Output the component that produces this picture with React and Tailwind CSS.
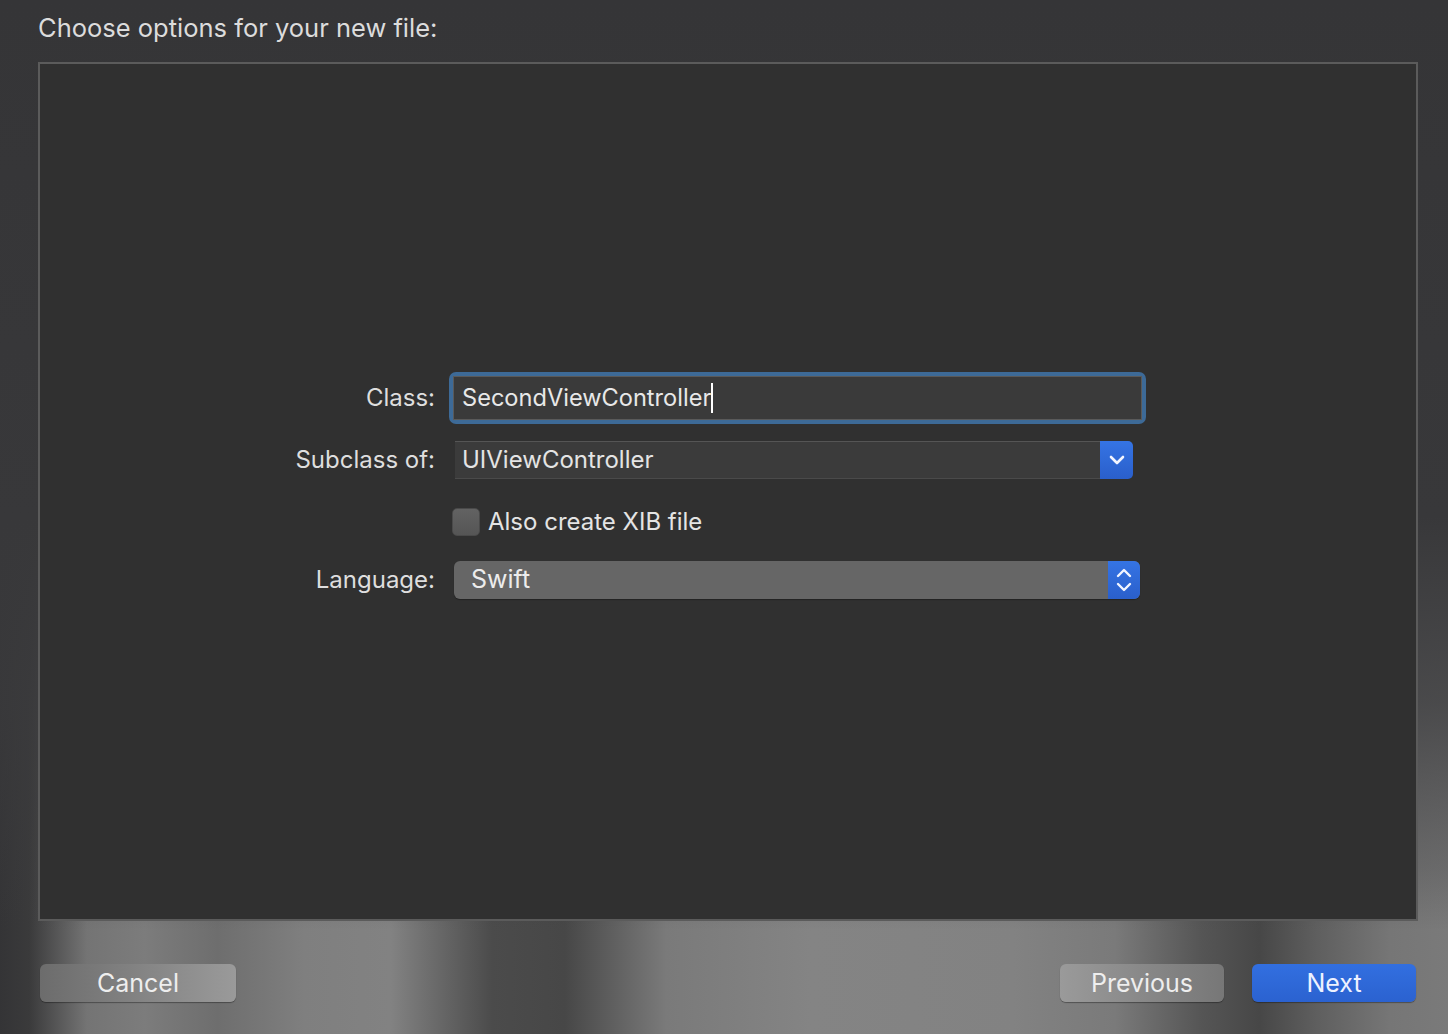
import React from "react";

const font = { fontFamily: "Inter, 'Liberation Sans', sans-serif" };

function ChevronDown() {
  return (
    <svg width="16" height="10" viewBox="0 0 16 10">
      <polyline points="2,2 8,8 14,2" fill="none" stroke="#f2f5ff" strokeWidth="2.6" strokeLinecap="round" strokeLinejoin="round" />
    </svg>
  );
}

function Stepper() {
  return (
    <svg width="18" height="28" viewBox="0 0 18 28">
      <polyline points="3,10 9,4 15,10" fill="none" stroke="#f2f5ff" strokeWidth="2.4" strokeLinecap="round" strokeLinejoin="round" />
      <polyline points="3,18 9,24 15,18" fill="none" stroke="#f2f5ff" strokeWidth="2.4" strokeLinecap="round" strokeLinejoin="round" />
    </svg>
  );
}

function Row({ label, children, className }) {
  return (
    <div className={"flex items-center " + (className || "")}>
      <div className="w-[395px] text-right text-[24px] text-[#dedede] leading-none">{label}</div>
      <div className="ml-[14px] flex items-center">{children}</div>
    </div>
  );
}

export default function App() {
  return (
    <div
      className="relative w-[1448px] h-[1034px] overflow-hidden bg-[linear-gradient(90deg,#343436_0%,#3a3a3b_2%,#747474_6%,#7c7c7c_10%,#6e6e6e_15%,#7f7f7f_21%,#828282_27%,#4b4b4b_34%,#474747_39%,#7a7a7a_46%,#848484_56%,#828282_70%,#7a7a7a_77%,#555555_83%,#474747_87%,#5f5f5f_91%,#767676_96%,#7a7a7a_100%)]"
      style={font}
    >
      <div className="absolute inset-0 bg-[linear-gradient(180deg,#353537_0%,#38383a_50%,rgba(58,58,60,0.75)_68%,rgba(58,58,60,0.25)_84%,rgba(58,58,60,0)_90%)]" />
      <div className="relative flex flex-col h-full">
        <div className="h-[62px] pl-[38px] pt-[13px] text-[25.5px] leading-[30px] text-[#dcdcdc]">
          Choose options for your new file:
        </div>
        <div className="ml-[38px] mr-[30px] h-[859px] border-2 border-[#5b5b5b] bg-[#303030] pt-[308px] flex flex-col">
          <Row label="Class:" className="h-[52px]">
            <div className="w-[697px] h-[52px] rounded-[7px] bg-[#3d6a97] p-[4px]">
              <div className="h-full border border-[#5a5a5a] bg-[#3a3a3a] flex items-center pl-[8px] text-[23.6px] text-[#e8e8e8]">
                SecondViewController
                <span className="inline-block w-[2px] h-[30px] bg-white" />
              </div>
            </div>
          </Row>
          <Row label="Subclass of:" className="h-[38px] mt-[17px]">
            <div className="ml-[6px] w-[678px] h-[38px] flex">
              <div className="flex-1 h-full bg-[#3b3b3b] border-t border-[#555555] border-b border-b-[#4a4a4a] flex items-center pl-[7px] text-[24px] text-[#e4e4e4]">
                UIViewController
              </div>
              <div className="w-[33px] h-full rounded-r-[5px] bg-[linear-gradient(180deg,#3574e4,#2a5fcb)] flex items-center justify-center">
                <ChevronDown />
              </div>
            </div>
          </Row>
          <Row label="" className="h-[28px] mt-[29px]">
            <div className="ml-[3px] flex items-center">
              <div className="w-[28px] h-[28px] rounded-[5px] bg-[linear-gradient(180deg,#626262,#555555)] border border-[#4a4a4a]" />
              <span className="ml-[8px] text-[24px] text-[#e4e4e4] leading-none">Also create XIB file</span>
            </div>
          </Row>
          <Row label="Language:" className="h-[38px] mt-[25px]">
            <div className="ml-[5px] w-[686px] h-[38px] flex rounded-[6px] bg-[#666666] shadow-[0_1px_1px_rgba(0,0,0,0.3)]">
              <div className="flex-1 flex items-center pl-[17px] text-[25px] text-[#ececec]">Swift</div>
              <div className="w-[32px] h-full rounded-r-[6px] bg-[linear-gradient(180deg,#3574e4,#2a5fcb)] flex items-center justify-center">
                <Stepper />
              </div>
            </div>
          </Row>
        </div>
        <div className="flex items-start pt-[43px] pl-[40px] pr-[32px]">
          <button className="w-[196px] h-[38px] rounded-[6px] bg-[linear-gradient(90deg,#6c6c6c,#9a9a9a)] shadow-[0_1px_1px_rgba(0,0,0,0.35)] text-[25px] text-[#eeeeee] leading-none">
            Cancel
          </button>
          <div className="flex-1" />
          <button className="w-[164px] h-[38px] rounded-[6px] bg-[linear-gradient(90deg,#9a9a9a,#777777)] shadow-[0_1px_1px_rgba(0,0,0,0.35)] text-[25px] text-[#eeeeee] leading-none">
            Previous
          </button>
          <button className="ml-[28px] w-[164px] h-[38px] rounded-[6px] bg-[linear-gradient(180deg,#326fe0,#2b62d0)] shadow-[0_1px_1px_rgba(0,0,0,0.35)] text-[25px] text-[#eef2ff] leading-none">
            Next
          </button>
        </div>
      </div>
    </div>
  );
}
